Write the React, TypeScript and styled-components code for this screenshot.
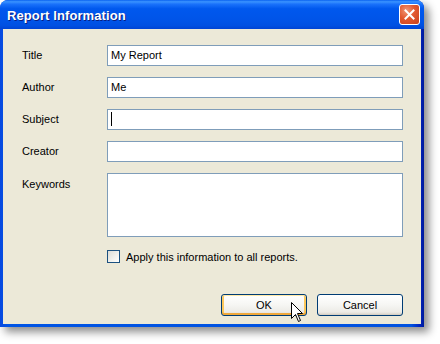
import styled, { createGlobalStyle } from "styled-components";

const GlobalStyle = createGlobalStyle`
  body {
    margin: 0;
    background: #ffffff;
    font-family: "Liberation Sans", Arial, sans-serif;
  }
`;

const Page = styled.div`
  width: 440px;
  height: 344px;
  position: relative;
  overflow: hidden;
`;

const Window = styled.div`
  width: 424px;
  height: 327px;
  display: flex;
  flex-direction: column;
  border-radius: 8px 8px 0 0;
  background: linear-gradient(to right, #0849e0 0%, #0055e5 2%, #0052e0 97%, #0024c0 99%, #001a9a 100%);
  box-shadow: 5px 5px 8px rgba(0, 0, 0, 0.45);
`;

const TitleBar = styled.div`
  height: 29px;
  flex: none;
  display: flex;
  align-items: center;
  justify-content: space-between;
  padding: 0 4px 0 7px;
  border-radius: 8px 8px 0 0;
  background: linear-gradient(
    to bottom,
    #0a62f0 0%,
    #3a93ff 6%,
    #1a72fb 14%,
    #0058ee 30%,
    #0054e8 70%,
    #0050e2 88%,
    #0044d4 100%
  );
`;

const Caption = styled.div`
  color: #ffffff;
  font-weight: bold;
  font-size: 13px;
  letter-spacing: 0.1px;
  text-shadow: 1px 1px 0 #0a1e80;
  padding-top: 1px;
`;

const CloseButton = styled.div`
  width: 19px;
  height: 19px;
  border: 1px solid #ffffff;
  border-radius: 3px;
  display: flex;
  align-items: center;
  justify-content: center;
  background: radial-gradient(circle at 35% 30%, #f09878 0%, #e2582f 45%, #c8401c 100%);
  margin-top: -1px;
`;

const Client = styled.div`
  flex: 1;
  margin: 0 3px 3px 3px;
  background: #ece9d8;
  padding: 16px 18px 8px 19px;
  display: flex;
  flex-direction: column;
  position: relative;
`;

const Form = styled.div`
  display: grid;
  grid-template-columns: 85px 296px;
  row-gap: 11px;
`;

const Label = styled.div<{ $top?: boolean }>`
  font-size: 11px;
  color: #000000;
  line-height: ${(p) => (p.$top ? "16px" : "21px")};
  padding-top: ${(p) => (p.$top ? "3px" : "0")};
`;

const Field = styled.div<{ $tall?: boolean }>`
  box-sizing: border-box;
  height: ${(p) => (p.$tall ? "64px" : "21px")};
  border: 1px solid #7f9db9;
  background: #ffffff;
  font-size: 11px;
  line-height: 19px;
  padding-left: 3px;
  color: #000000;
  position: relative;
`;

const Caret = styled.span`
  display: inline-block;
  width: 1px;
  height: 14px;
  background: #000000;
  vertical-align: middle;
  margin-top: -2px;
`;

const CheckRow = styled.label`
  display: flex;
  align-items: center;
  gap: 6px;
  margin: 13px 0 0 85px;
  font-size: 11px;
  color: #000000;
`;

const CheckBox = styled.span`
  box-sizing: border-box;
  width: 13px;
  height: 13px;
  border: 1px solid #1c5180;
  background: linear-gradient(135deg, #dcdcd6 0%, #f2f2ee 60%, #ffffff 100%);
`;

const Buttons = styled.div`
  margin-top: auto;
  display: flex;
  justify-content: flex-end;
  gap: 10px;
  padding-right: 0;
`;

const Button = styled.div<{ $default?: boolean }>`
  box-sizing: border-box;
  width: 86px;
  height: 22px;
  border: 1px solid #003c74;
  border-radius: 3px;
  font-size: 11px;
  color: #000000;
  display: flex;
  align-items: center;
  justify-content: center;
  background: linear-gradient(to bottom, #ffffff 0%, #f6f6f3 50%, #ecebe6 85%, #d6d0c5 100%);
  box-shadow: ${(p) =>
    p.$default
      ? "inset 0 1px 0 #ffe8a5, inset 0 -2px 0 #f0a83a, inset 2px 0 0 #fcc85c, inset -2px 0 0 #fcc85c"
      : "inset 0 -1px 0 #d6d0c5"};
`;

const Pointer = styled.svg`
  position: absolute;
  left: 291px;
  top: 302px;
`;

export default function App() {
  return (
    <Page>
      <GlobalStyle />
      <Window>
        <TitleBar>
          <Caption>Report Information</Caption>
          <CloseButton>
            <svg width="11" height="11" viewBox="0 0 11 11">
              <path d="M1.5 1.5 L9.5 9.5 M9.5 1.5 L1.5 9.5" stroke="#ffffff" strokeWidth="2" strokeLinecap="square" />
            </svg>
          </CloseButton>
        </TitleBar>
        <Client>
          <Form>
            <Label>Title</Label>
            <Field>My Report</Field>
            <Label>Author</Label>
            <Field>Me</Field>
            <Label>Subject</Label>
            <Field>
              <Caret />
            </Field>
            <Label>Creator</Label>
            <Field />
            <Label $top>Keywords</Label>
            <Field $tall />
          </Form>
          <CheckRow>
            <CheckBox />
            Apply this information to all reports.
          </CheckRow>
          <Buttons>
            <Button $default>OK</Button>
            <Button>Cancel</Button>
          </Buttons>
        </Client>
      </Window>
      <Pointer width="13" height="21" viewBox="0 0 13 21">
        <path
          d="M0.5 0.5 L0.5 16.5 L4.5 12.5 L7.5 19.5 L9.5 18.5 L6.5 11.5 L11.5 11.5 Z"
          fill="#ffffff"
          stroke="#000000"
          strokeWidth="1"
          strokeLinejoin="miter"
        />
      </Pointer>
    </Page>
  );
}
